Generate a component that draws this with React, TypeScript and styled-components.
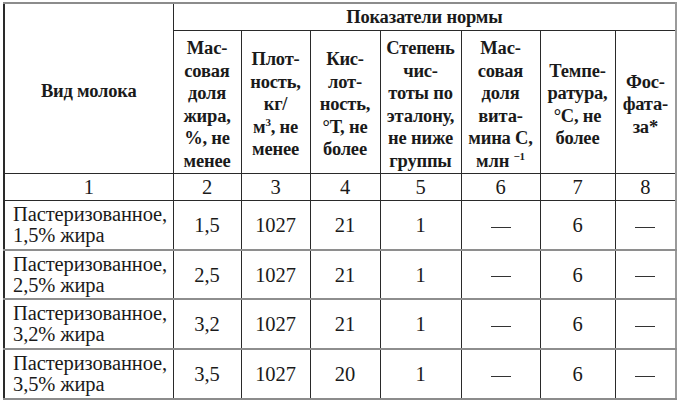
import styled, { createGlobalStyle } from "styled-components";
import { Fragment } from "react";

const GlobalStyle = createGlobalStyle`
    html, body {
        margin: 0;
        padding: 0;
        background: #ffffff;
    }
    body {
        font-family: "Liberation Serif", "DejaVu Serif", serif;
        color: #1a1a1a;
    }
`;

const Page = styled.div`
    padding: 2px 0 0 3px;
`;

const Table = styled.table`
    table-layout: fixed;
    width: 672px;
    border-collapse: collapse;
    border-top: 2px solid #8c8c8c;
    border-right: 2px solid #9a9a9a;
    border-bottom: 2px solid #8c8c8c;
    border-left: 2px solid #2a2a2a;
`;

const Row = styled.tr<{ h: number; divider?: boolean }>`
    height: ${(p) => p.h}px;
    border-bottom: ${(p) => (p.divider ? "2px solid #8e8e8e" : "1px solid #2a2a2a")};
`;

const HeadCell = styled.th<{ padTop?: number }>`
    border: 1px solid #2a2a2a;
    font-weight: bold;
    font-size: 18.5px;
    line-height: 22.5px;
    text-align: center;
    vertical-align: middle;
    padding: ${(p) => p.padTop ?? 0}px 0 0 0;
    letter-spacing: -0.2px;
`;

const Cell = styled.td<{ left?: boolean }>`
    border-left: 1px solid #2a2a2a;
    border-right: 1px solid #2a2a2a;
    font-size: 20.5px;
    line-height: 21px;
    text-align: ${(p) => (p.left ? "left" : "center")};
    padding: ${(p) => (p.left ? "0 0 0 8px" : "1px 0 0 0")};
    vertical-align: middle;
    white-space: nowrap;
    letter-spacing: -0.1px;
`;

const Sup = styled.sup`
    font-size: 11px;
    line-height: 0;
    vertical-align: 7px;
`;

const Dash = styled.span`
    display: inline-block;
    width: 20px;
    height: 1px;
    background: #333;
    vertical-align: middle;
`;

const widths = [169, 68, 69, 70, 81, 79, 75, 61];

type Line = string | JSX.Element;

const headers: Line[][] = [
    ["Мас-", "совая", "доля", "жира,", "%, не", "менее"],
    ["Плот-", "ность,", "кг/", <>м<Sup>3</Sup>, не</>, "менее"],
    ["Кис-", "лот-", "ность,", "°Т, не", "более"],
    ["Степень", "чис-", "тоты по", "эталону,", "не ниже", "группы"],
    ["Мас-", "совая", "доля", "вита-", "мина С,", <>млн <Sup>−1</Sup></>],
    ["Темпе-", "ратура,", "°С, не", "более"],
    ["Фос-", "фата-", "за*"],
];

const rows = [
    { name: "1,5% жира", fat: "1,5", acid: "21", h: 50 },
    { name: "2,5% жира", fat: "2,5", acid: "21", h: 49 },
    { name: "3,2% жира", fat: "3,2", acid: "21", h: 50 },
    { name: "3,5% жира", fat: "3,5", acid: "20", h: 50 },
];

export default function App() {
    return (
        <Page>
            <GlobalStyle />
            <Table>
                <colgroup>
                    {widths.map((w, i) => (
                        <col key={i} style={{ width: w }} />
                    ))}
                </colgroup>
                <thead>
                    <Row h={27}>
                        <HeadCell rowSpan={2} padTop={6}>Вид молока</HeadCell>
                        <HeadCell colSpan={7}>Показатели нормы</HeadCell>
                    </Row>
                    <Row h={143}>
                        {headers.map((lines, i) => (
                            <HeadCell key={i} padTop={6}>
                                {lines.map((l, j) => (
                                    <Fragment key={j}>
                                        {j > 0 && <br />}
                                        {l}
                                    </Fragment>
                                ))}
                            </HeadCell>
                        ))}
                    </Row>
                </thead>
                <tbody>
                    <Row h={27}>
                        {widths.map((_, i) => (
                            <Cell key={i}>{i + 1}</Cell>
                        ))}
                    </Row>
                    {rows.map((r, i) => (
                        <Row key={i} h={r.h} divider={i < rows.length - 1}>
                            <Cell left>
                                Пастеризованное,
                                <br />
                                {r.name}
                            </Cell>
                            <Cell>{r.fat}</Cell>
                            <Cell>1027</Cell>
                            <Cell>{r.acid}</Cell>
                            <Cell>1</Cell>
                            <Cell><Dash /></Cell>
                            <Cell>6</Cell>
                            <Cell><Dash /></Cell>
                        </Row>
                    ))}
                </tbody>
            </Table>
        </Page>
    );
}
